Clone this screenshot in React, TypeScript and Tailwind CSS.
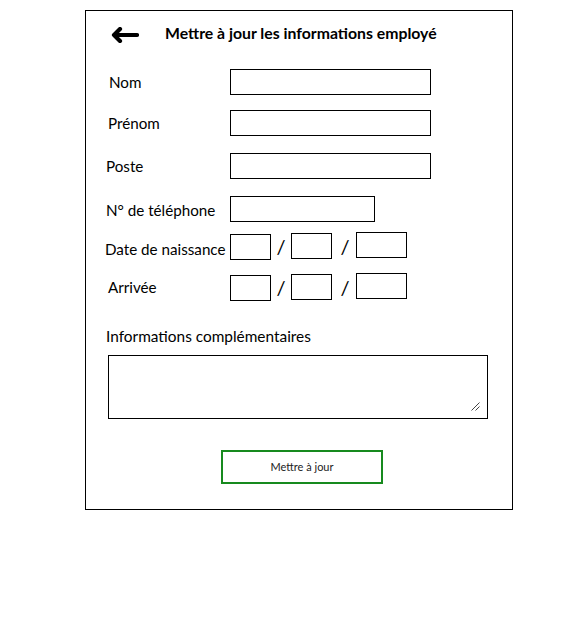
import React from "react";

function DateRow({ label, labelClass }: { label: string; labelClass: string }) {
  return (
    <div className="flex items-start h-[28px]">
      <div className={`w-[144px] shrink-0 whitespace-nowrap leading-[20px] ${labelClass}`}>{label}</div>
      <div className="mt-[2px] w-[41px] h-[26px] border border-black" />
      <div className="w-[20px] text-center text-[20px] leading-[28px]">/</div>
      <div className="mt-[1px] w-[41px] h-[26px] border border-black" />
      <div className="w-[24px] pl-[2px] text-center text-[20px] leading-[28px]">/</div>
      <div className="w-[51px] h-[26px] border border-black" />
    </div>
  );
}

function TextRow({ label, labelClass, inputClass, rowClass }: { label: string; labelClass: string; inputClass: string; rowClass: string }) {
  return (
    <div className={`flex items-start h-[26px] ${rowClass}`}>
      <div className={`w-[144px] shrink-0 whitespace-nowrap leading-[20px] ${labelClass}`}>{label}</div>
      <div className={`h-[26px] border border-black ${inputClass}`} />
    </div>
  );
}

export default function App() {
  return (
    <div className="w-[562px] h-[619px] bg-white text-black font-['Lato',sans-serif] text-[15.2px]">
      <div className="flex flex-col">
        <div className="ml-[85px] mt-[10px] w-[428px] h-[500px] border border-black flex flex-col">
          {/* header */}
          <div className="flex items-start h-[16px] mt-[16px]">
            <svg className="ml-[25px] w-[28px] h-[16px] shrink-0" viewBox="0 0 28 16" fill="none">
              <path d="M26 8 H3 M9 2 L3 8 L9 14" stroke="black" strokeWidth="4.2" strokeLinecap="round" strokeLinejoin="round" />
            </svg>
            <div className="ml-[26px] -mt-[4px] font-bold text-[15.8px] leading-[20px] whitespace-nowrap">
              Mettre à jour les informations employé
            </div>
          </div>

          <TextRow rowClass="mt-[26px]" label="Nom" labelClass="pl-[23px] mt-[3px]" inputClass="w-[201px]" />
          <TextRow rowClass="mt-[15px]" label="Prénom" labelClass="pl-[22px] mt-[3px]" inputClass="w-[201px]" />
          <TextRow rowClass="mt-[17px]" label="Poste" labelClass="pl-[20px] mt-[3px]" inputClass="w-[201px]" />
          <TextRow rowClass="mt-[17px]" label="N° de téléphone" labelClass="pl-[20px] mt-[4px]" inputClass="w-[145px]" />

          <div className="mt-[10px]">
            <DateRow label="Date de naissance" labelClass="pl-[19px] mt-[7px]" />
          </div>
          <div className="mt-[13px]">
            <DateRow label="Arrivée" labelClass="pl-[22px] mt-[4px]" />
          </div>

          <div className="mt-[25px] pl-[20px] leading-[20px] whitespace-nowrap text-[15.4px]">Informations complémentaires</div>

          <div className="relative mt-[9px] ml-[22px] w-[380px] h-[64px]">
            <textarea className="block w-full h-full border border-black bg-white outline-none resize-none" />
            <svg className="absolute right-[8px] bottom-[8px] w-[10px] h-[10px] pointer-events-none" viewBox="0 0 10 10">
              <path d="M1.5 9.5 L9.5 1.5 M5.5 9.5 L9.5 5.5" stroke="#444" strokeWidth="1" />
            </svg>
          </div>

          <button className="mt-[31px] ml-[135px] w-[162px] h-[34px] border-2 border-[#178a1e] bg-white text-[11px] text-[#222] flex items-center justify-center">
            Mettre à jour
          </button>
        </div>
      </div>
    </div>
  );
}
